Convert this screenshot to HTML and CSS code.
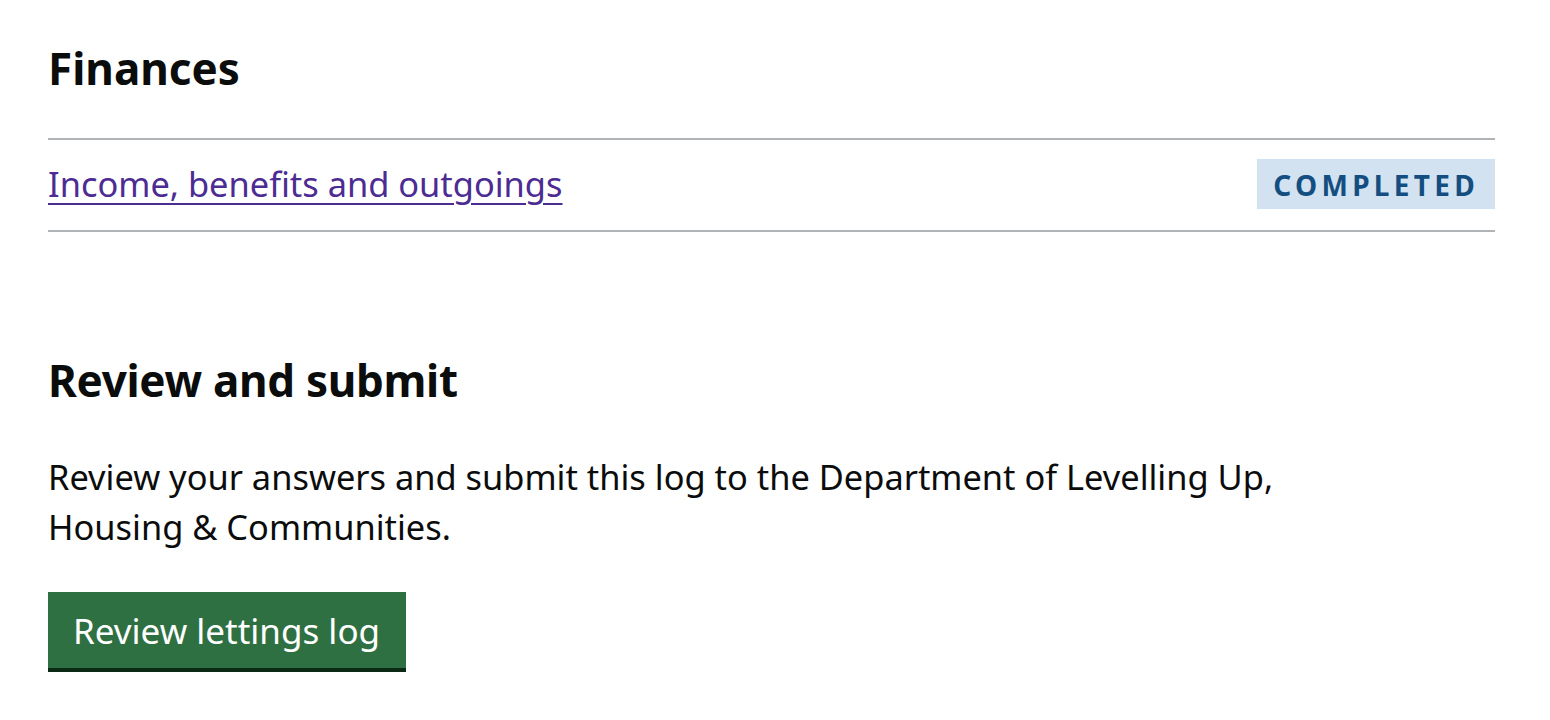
FILE: index.html
```html
<!DOCTYPE html>
<html lang="en">
<head>
<meta charset="utf-8">
<title>Lettings log</title>
<link rel="stylesheet" href="styles.css">
</head>
<body>
<main class="page">
  <section class="section">
    <h2 class="heading">Finances</h2>
    <ul class="task-list">
      <li class="task-item">
        <a class="task-link" href="#">Income, benefits and outgoings</a>
        <strong class="tag">Completed</strong>
      </li>
    </ul>
  </section>
  <section class="section review">
    <h2 class="heading">Review and submit</h2>
    <p class="body">Review your answers and submit this log to the Department of Levelling Up, Housing &amp; Communities.</p>
    <a class="button" href="#">Review lettings log</a>
  </section>
</main>
</body>
</html>
```

FILE: styles.css
```css
html, body {
  margin: 0;
  padding: 0;
  background: #ffffff;
}

body {
  font-family: "Noto Sans", "Liberation Sans", Arial, sans-serif;
  color: #0b0c0c;
}

.page {
  padding: 0 55px 0 48px;
}

.section {
  display: flex;
  flex-direction: column;
  align-items: stretch;
}

.heading {
  margin: 38px 0 0;
  font-size: 44px;
  line-height: 60px;
  font-weight: 700;
  letter-spacing: 0;
}

.review .heading {
  margin-top: 118px;
  letter-spacing: -0.3px;
}

.task-list {
  list-style: none;
  margin: 40px 0 0;
  padding: 0;
  border-top: 2px solid #b1b4b6;
}

.task-item {
  display: flex;
  justify-content: space-between;
  align-items: center;
  padding: 19px 0 21px;
  border-bottom: 2px solid #b1b4b6;
}

.task-link {
  font-size: 34.4px;
  line-height: 50px;
  color: #4c2c92;
  text-decoration: underline;
  text-decoration-thickness: 2px;
  text-underline-offset: 6px;
}

.tag {
  display: inline-block;
  padding: 10px 16px 8px;
  background: #d2e2f1;
  color: #144e81;
  font-size: 28px;
  line-height: 32px;
  font-weight: 700;
  letter-spacing: 4.3px;
  text-transform: uppercase;
}

.body {
  margin: 42px 0 0;
  max-width: 1300px;
  font-size: 34.4px;
  line-height: 50px;
}

.button {
  display: block;
  align-self: flex-start;
  margin-top: 40px;
  padding: 20px 26px 18px 25px;
  border-bottom: 4px solid #0b2a16;
  background: #2f7043;
  color: #ffffff;
  font-size: 35px;
  line-height: 38px;
  text-decoration: none;
}
```
